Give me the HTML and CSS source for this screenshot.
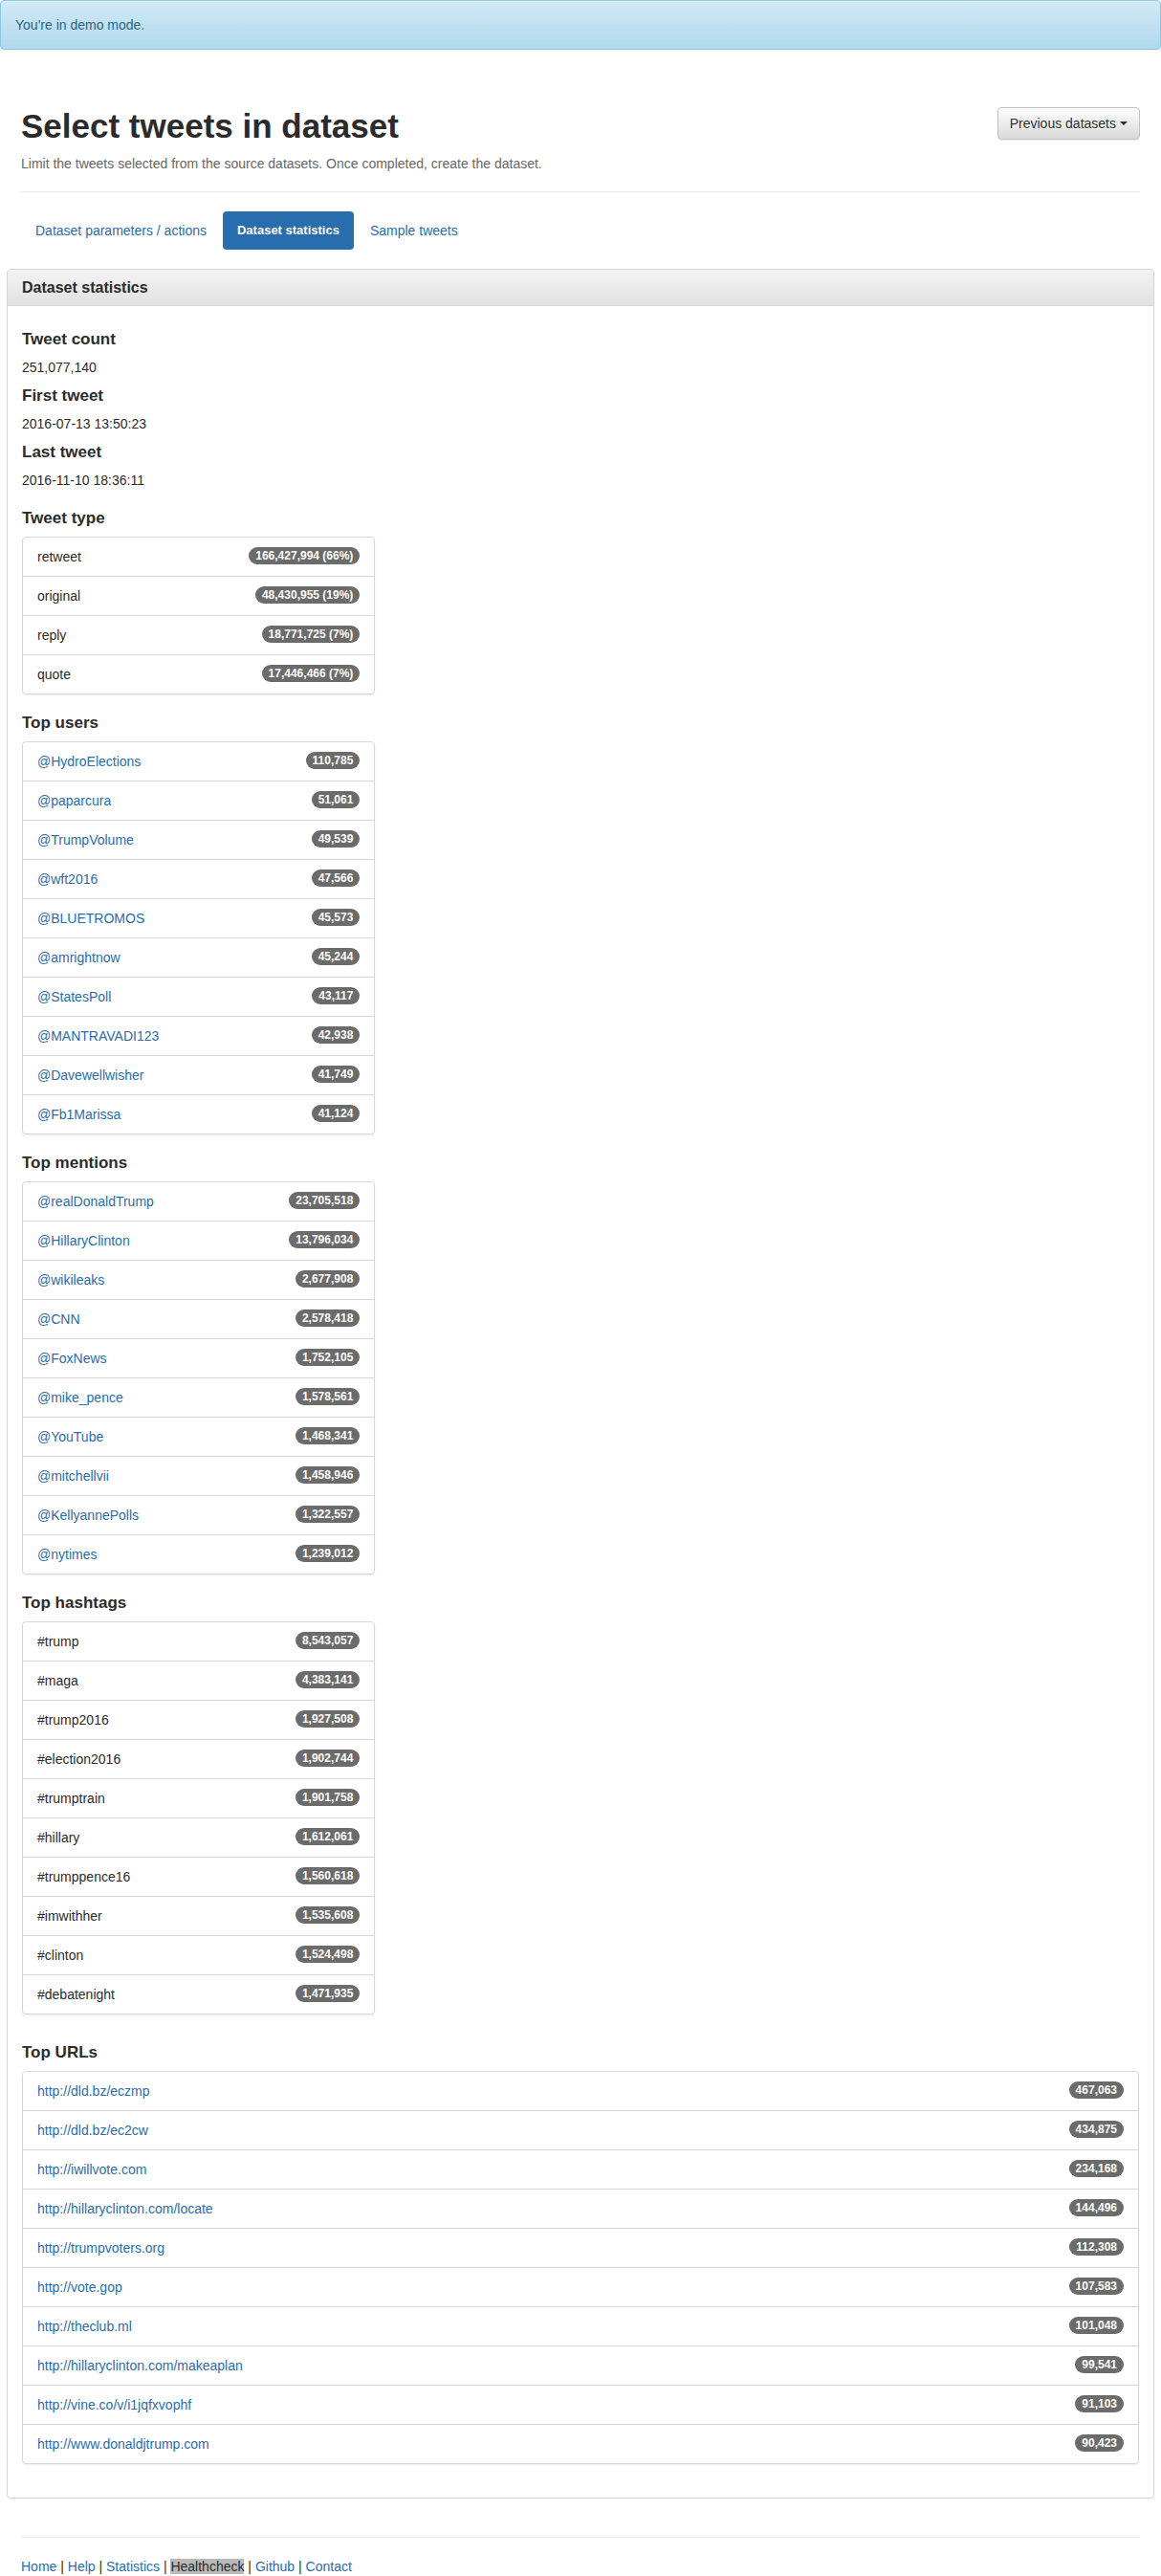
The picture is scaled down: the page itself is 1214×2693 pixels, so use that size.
FILE: index.html
```html
<!DOCTYPE html>
<html lang="en">
<head>
<meta charset="utf-8">
<meta name="viewport" content="width=device-width, initial-scale=1">
<title>Select tweets in dataset</title>
<link rel="stylesheet" href="styles.css">
</head>
<body>
<div class="alert" role="alert">You're in demo mode.</div>
<div class="container">
  <header class="page-header">
    <div>
      <h1>Select tweets in dataset</h1>
      <p class="lead">Limit the tweets selected from the source datasets. Once completed, create the dataset.</p>
    </div>
    <button class="btn" type="button" aria-haspopup="true">Previous datasets <span class="caret"></span></button>
  </header>
  <nav class="pills">
    <a href="#parameters">Dataset parameters / actions</a>
    <a class="active" href="#statistics">Dataset statistics</a>
    <a href="#sample">Sample tweets</a>
  </nav>
  <main class="panel" id="statistics">
    <h2 class="panel-heading">Dataset statistics</h2>
    <div class="panel-body">
      <div class="columns">
        <div class="stack">
          <section class="facts">
            <h3>Tweet count</h3>
            <p>251,077,140</p>
            <h3>First tweet</h3>
            <p>2016-07-13 13:50:23</p>
            <h3>Last tweet</h3>
            <p>2016-11-10 18:36:11</p>
          </section>
          <section class="group">
            <h3>Tweet type</h3>
            <ul class="list">
              <li>retweet <span class="badge">166,427,994 (66%)</span></li>
              <li>original <span class="badge">48,430,955 (19%)</span></li>
              <li>reply <span class="badge">18,771,725 (7%)</span></li>
              <li>quote <span class="badge">17,446,466 (7%)</span></li>
            </ul>
          </section>
          <section class="group">
            <h3>Top users</h3>
            <ul class="list">
              <li><a href="#">@HydroElections</a> <span class="badge">110,785</span></li>
              <li><a href="#">@paparcura</a> <span class="badge">51,061</span></li>
              <li><a href="#">@TrumpVolume</a> <span class="badge">49,539</span></li>
              <li><a href="#">@wft2016</a> <span class="badge">47,566</span></li>
              <li><a href="#">@BLUETROMOS</a> <span class="badge">45,573</span></li>
              <li><a href="#">@amrightnow</a> <span class="badge">45,244</span></li>
              <li><a href="#">@StatesPoll</a> <span class="badge">43,117</span></li>
              <li><a href="#">@MANTRAVADI123</a> <span class="badge">42,938</span></li>
              <li><a href="#">@Davewellwisher</a> <span class="badge">41,749</span></li>
              <li><a href="#">@Fb1Marissa</a> <span class="badge">41,124</span></li>
            </ul>
          </section>
          <section class="group">
            <h3>Top mentions</h3>
            <ul class="list">
              <li><a href="#">@realDonaldTrump</a> <span class="badge">23,705,518</span></li>
              <li><a href="#">@HillaryClinton</a> <span class="badge">13,796,034</span></li>
              <li><a href="#">@wikileaks</a> <span class="badge">2,677,908</span></li>
              <li><a href="#">@CNN</a> <span class="badge">2,578,418</span></li>
              <li><a href="#">@FoxNews</a> <span class="badge">1,752,105</span></li>
              <li><a href="#">@mike_pence</a> <span class="badge">1,578,561</span></li>
              <li><a href="#">@YouTube</a> <span class="badge">1,468,341</span></li>
              <li><a href="#">@mitchellvii</a> <span class="badge">1,458,946</span></li>
              <li><a href="#">@KellyannePolls</a> <span class="badge">1,322,557</span></li>
              <li><a href="#">@nytimes</a> <span class="badge">1,239,012</span></li>
            </ul>
          </section>
          <section class="group">
            <h3>Top hashtags</h3>
            <ul class="list">
              <li>#trump <span class="badge">8,543,057</span></li>
              <li>#maga <span class="badge">4,383,141</span></li>
              <li>#trump2016 <span class="badge">1,927,508</span></li>
              <li>#election2016 <span class="badge">1,902,744</span></li>
              <li>#trumptrain <span class="badge">1,901,758</span></li>
              <li>#hillary <span class="badge">1,612,061</span></li>
              <li>#trumppence16 <span class="badge">1,560,618</span></li>
              <li>#imwithher <span class="badge">1,535,608</span></li>
              <li>#clinton <span class="badge">1,524,498</span></li>
              <li>#debatenight <span class="badge">1,471,935</span></li>
            </ul>
          </section>
        </div>
      </div>
      <section class="group">
        <h3>Top URLs</h3>
        <ul class="list">
          <li><a href="#">http://dld.bz/eczmp</a> <span class="badge">467,063</span></li>
          <li><a href="#">http://dld.bz/ec2cw</a> <span class="badge">434,875</span></li>
          <li><a href="#">http://iwillvote.com</a> <span class="badge">234,168</span></li>
          <li><a href="#">http://hillaryclinton.com/locate</a> <span class="badge">144,496</span></li>
          <li><a href="#">http://trumpvoters.org</a> <span class="badge">112,308</span></li>
          <li><a href="#">http://vote.gop</a> <span class="badge">107,583</span></li>
          <li><a href="#">http://theclub.ml</a> <span class="badge">101,048</span></li>
          <li><a href="#">http://hillaryclinton.com/makeaplan</a> <span class="badge">99,541</span></li>
          <li><a href="#">http://vine.co/v/i1jqfxvophf</a> <span class="badge">91,103</span></li>
          <li><a href="#">http://www.donaldjtrump.com</a> <span class="badge">90,423</span></li>
        </ul>
      </section>
    </div>
  </main>
  <footer class="footer">
    <a href="#">Home</a> | <a href="#">Help</a> | <a href="#">Statistics</a> | <a class="selected" href="#">Healthcheck</a> | <a href="#">Github</a> | <a href="#">Contact</a>
  </footer>
</div>
</body>
</html>
```
FILE: styles.css
```css
* {
  box-sizing: border-box;
}

body {
  margin: 0;
  background: #fff;
  color: #2b2b2b;
  font: 14px/20px "Liberation Sans", Arial, sans-serif;
}

h1,
h2,
h3,
p,
ul {
  margin: 0;
}

a {
  color: #286dad;
  text-decoration: none;
}

a:hover {
  text-decoration: underline;
}

.alert {
  padding: 15px;
  border: 1px solid #8bc8e6;
  border-radius: 4px;
  background: linear-gradient(#d2e9f5, #b0d9ee);
  box-shadow: inset 0 1px 0 rgba(255, 255, 255, 0.25), 0 1px 2px rgba(0, 0, 0, 0.05);
  color: #276282;
  text-shadow: 0 1px 0 rgba(255, 255, 255, 0.2);
}

.container {
  max-width: 1200px;
  margin: 60px auto 0;
}

.page-header {
  display: flex;
  justify-content: space-between;
  align-items: flex-start;
  gap: 20px;
  margin: 0 15px 20px;
  padding-bottom: 19px;
  border-bottom: 1px solid #e8e8e8;
}

.page-header h1 {
  margin-bottom: 10px;
  font-size: 35px;
  line-height: 39px;
}

.lead {
  color: #676767;
}

.btn {
  display: flex;
  align-items: center;
  gap: 4px;
  padding: 6px 12px;
  border: 1px solid #c2c2c2;
  border-radius: 4px;
  background: linear-gradient(#fff, #d9d9d9);
  box-shadow: inset 0 1px 0 rgba(255, 255, 255, 0.15), 0 1px 1px rgba(0, 0, 0, 0.075);
  color: #2b2b2b;
  font: inherit;
  text-shadow: 0 1px 0 #fff;
  white-space: nowrap;
}

.caret {
  border-top: 4px solid;
  border-right: 4px solid transparent;
  border-left: 4px solid transparent;
}

.pills {
  display: flex;
  gap: 2px;
  margin: 0 15px 20px;
}

.pills a {
  padding: 10px 15px;
  border-radius: 4px;
}

.pills .active {
  background: #286dad;
  color: #fff;
  font-size: 13px;
  font-weight: bold;
}

.panel {
  border: 1px solid #d7d7d7;
  border-radius: 4px;
  box-shadow: 0 1px 2px rgba(0, 0, 0, 0.05);
}

.panel-heading {
  padding: 10px 15px;
  border-bottom: 1px solid #d7d7d7;
  border-radius: 3px 3px 0 0;
  background: linear-gradient(#f3f3f3, #e2e2e2);
  font-size: 16px;
  line-height: 17px;
}

.panel-body {
  display: flex;
  flex-direction: column;
  gap: 30px;
  padding: 25px 15px 35px;
}

.columns {
  display: grid;
  grid-template-columns: repeat(3, 1fr);
  gap: 30px;
}

.stack {
  display: flex;
  flex-direction: column;
  gap: 20px;
}

.facts,
.group {
  display: flex;
  flex-direction: column;
  gap: 10px;
}

.facts h3,
.group h3 {
  font-size: 17px;
  line-height: 19px;
}

.list {
  padding: 0;
  border: 1px solid #d7d7d7;
  border-radius: 4px;
  box-shadow: 0 1px 2px rgba(0, 0, 0, 0.075);
  list-style: none;
}

.list li {
  display: flex;
  justify-content: space-between;
  align-items: flex-start;
  padding: 10px 15px;
}

.list li + li {
  border-top: 1px solid #d7d7d7;
}

.badge {
  padding: 3px 7px;
  border-radius: 10px;
  background: #6b6b6b;
  color: #fff;
  font-size: 12px;
  font-weight: bold;
  line-height: 12px;
}

.footer {
  margin: 40px 15px 0;
  padding-top: 20px;
  border-top: 1px solid #e8e8e8;
}

.footer .selected {
  background: #b9b9b9;
  color: #2b2b2b;
}
```
